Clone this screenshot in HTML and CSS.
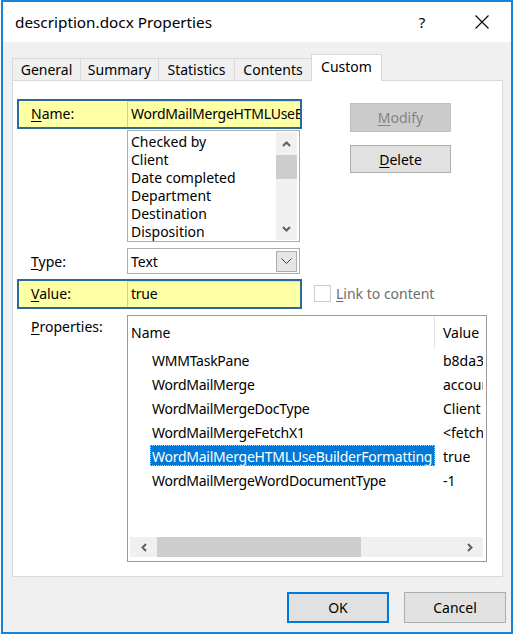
FILE: index.html
```html
<!DOCTYPE html>
<html>
<head>
<meta charset="utf-8">
<title>description.docx Properties</title>
<link rel="stylesheet" href="styles.css">
</head>
<body>
<div class="window">
  <div class="titlebar">
    <span class="title">description.docx Properties</span>
    <span class="help">?</span>
    <span class="close"><svg width="14" height="14" viewBox="0 0 14 14"><path d="M0.5 0.5 L13.5 13.5 M13.5 0.5 L0.5 13.5" stroke="#000" stroke-width="1.1" fill="none"/></svg></span>
  </div>
  <div class="client">
    <div class="tabs">
      <div class="tab t-general">General</div>
      <div class="tab t-summary">Summary</div>
      <div class="tab t-stats">Statistics</div>
      <div class="tab t-contents">Contents</div>
      <div class="tab t-custom active">Custom</div>
    </div>
    <div class="panel">
      <div class="top">
        <div class="leftcol">
          <div class="hl">
            <span class="hlabel"><u>N</u>ame:</span>
            <div class="field">WordMailMergeHTMLUseBuilderFormatting</div>
          </div>
          <div class="listbox">
            <div class="items">
              <div>Checked by</div>
              <div>Client</div>
              <div>Date completed</div>
              <div>Department</div>
              <div>Destination</div>
              <div>Disposition</div>
            </div>
            <div class="vscroll">
              <div class="arrow"><svg width="9" height="6" viewBox="0 0 9 6"><path d="M1 5 L4.5 1.5 L8 5" stroke="#606060" stroke-width="2" fill="none"/></svg></div>
              <div class="vthumb"></div>
              <div class="vspace"></div>
              <div class="arrow"><svg width="9" height="6" viewBox="0 0 9 6"><path d="M1 1 L4.5 4.5 L8 1" stroke="#606060" stroke-width="2" fill="none"/></svg></div>
            </div>
          </div>
          <div class="typerow">
            <span class="tlabel"><u>T</u>ype:</span>
            <div class="combo">
              <span class="ctext">Text</span>
              <span class="dd"><svg width="11" height="6" viewBox="0 0 11 6"><path d="M0.5 0.5 L5.5 5.5 L10.5 0.5" stroke="#404040" stroke-width="1" fill="none"/></svg></span>
            </div>
          </div>
          <div class="hl value">
            <span class="hlabel"><u>V</u>alue:</span>
            <div class="field">true</div>
          </div>
        </div>
        <div class="rightcol">
          <button class="btn disabled"><u>M</u>odify</button>
          <button class="btn delete"><u>D</u>elete</button>
          <div class="check">
            <span class="box"></span>
            <span class="clabel"><u>L</u>ink to content</span>
          </div>
        </div>
      </div>
      <div class="props">
        <span class="plabel"><u>P</u>roperties:</span>
        <div class="proplist">
          <div class="phead">
            <div class="hname">Name</div>
            <div class="hval">Value</div>
          </div>
          <div class="prows">
            <div class="prow"><div class="pname">WMMTaskPane</div><div class="pval">b8da3</div></div>
            <div class="prow"><div class="pname">WordMailMerge</div><div class="pval">account</div></div>
            <div class="prow"><div class="pname">WordMailMergeDocType</div><div class="pval">Client</div></div>
            <div class="prow"><div class="pname">WordMailMergeFetchX1</div><div class="pval">&lt;fetch</div></div>
            <div class="prow"><div class="pname sel">WordMailMergeHTMLUseBuilderFormatting</div><div class="pval">true</div></div>
            <div class="prow"><div class="pname">WordMailMergeWordDocumentType</div><div class="pval">-1</div></div>
          </div>
          <div class="hscroll">
            <div class="harrow"><svg width="6" height="9" viewBox="0 0 6 9"><path d="M5 1 L1.5 4.5 L5 8" stroke="#606060" stroke-width="2" fill="none"/></svg></div>
            <div class="hthumb"></div>
            <div class="hspace"></div>
            <div class="harrow"><svg width="6" height="9" viewBox="0 0 6 9"><path d="M1 1 L4.5 4.5 L1 8" stroke="#606060" stroke-width="2" fill="none"/></svg></div>
          </div>
        </div>
      </div>
    </div>
    <div class="footer">
      <button class="btn ok">OK</button>
      <button class="btn cancel">Cancel</button>
    </div>
  </div>
</div>
</body>
</html>
```

FILE: styles.css
```css
* { box-sizing: border-box; }
body {
  margin: 0;
  background: #ffffff;
  font-family: "Noto Sans", "Open Sans", sans-serif;
  font-size: 14px;
  color: #000;
}
u { text-decoration-thickness: 1px; text-underline-offset: 2px; }

.window {
  margin-left: 1px;
  width: 512px;
  height: 634px;
  border: 2px solid #1883d7;
  display: flex;
  flex-direction: column;
}

.titlebar {
  height: 40px;
  flex: none;
  background: #fff;
  display: flex;
  align-items: center;
}
.title { flex: 1; padding-left: 12px; font-size: 15.3px; }
.help { width: 30px; text-align: center; margin-right: 30px; font-size: 15px; }
.close { width: 30px; margin-right: 14px; display: flex; justify-content: center; }

.client {
  flex: 1;
  background: #f0f0f0;
  padding: 12px 0 0 9px;
}

.tabs { display: flex; align-items: flex-end; height: 26px; }
.tab {
  height: 22px;
  border: 1px solid #d9d9d9;
  border-bottom: none;
  background: #f0f0f0;
  text-align: center;
  line-height: 21px;
  margin-left: -1px;
}
.t-general { width: 69px; margin-left: 0; }
.t-summary { width: 79px; }
.t-stats { width: 77px; }
.t-contents { width: 78px; }
.t-custom { width: 71px; }
.tab.active {
  height: 27px;
  margin-bottom: -1px;
  background: #fff;
  position: relative;
  z-index: 1;
  line-height: 24px;
}

.panel {
  width: 491px;
  height: 497px;
  background: #fff;
  border: 1px solid #d9d9d9;
}

.top { display: flex; }
.leftcol {
  width: 285px;
  margin-left: 4px;
  margin-top: 18px;
  display: flex;
  flex-direction: column;
}
.hl {
  height: 30px;
  border: 2px solid #2a6a9c;
  background: #ffffa6;
  display: flex;
}
.hlabel { width: 108px; padding-left: 12px; line-height: 26px; }
.field {
  flex: 1;
  min-width: 0;
  overflow: hidden;
  white-space: nowrap;
  border-left: 1px solid #cfcf9f;
  border-top: 1px solid #e4e4b0;
  padding-left: 3px;
  line-height: 24px;
  letter-spacing: -0.25px;
}

.listbox {
  margin-top: 1px;
  margin-left: 110px;
  width: 173px;
  height: 112px;
  border: 1px solid #adadad;
  display: flex;
  background: #fff;
}
.items { flex: 1; padding: 2px 0 0 3px; line-height: 18px; }
.vscroll {
  width: 21px;
  margin: 1px 2px 1px 0;
  background: #f0f0f0;
  display: flex;
  flex-direction: column;
}
.arrow { height: 23px; display: flex; align-items: center; justify-content: center; }
.vthumb { height: 24px; background: #cdcdcd; }
.vspace { flex: 1; }

.typerow { display: flex; margin-top: 6px; height: 26px; }
.tlabel { width: 110px; padding-left: 14px; line-height: 28px; }
.combo {
  width: 173px;
  border: 1px solid #adadad;
  background: #fff;
  display: flex;
  align-items: center;
}
.ctext { flex: 1; padding-left: 3px; }
.dd {
  width: 21px;
  height: 21px;
  margin-right: 2px;
  background: #e5e5e5;
  border: 1px solid #adadad;
  display: flex;
  align-items: center;
  justify-content: center;
}
.hl.value { margin-top: 5px; }

.rightcol {
  display: flex;
  flex-direction: column;
  align-items: flex-start;
}
.btn {
  font: inherit;
  color: #000;
  background: #e1e1e1;
  border: 1px solid #adadad;
  padding: 0;
  margin: 0;
}
.rightcol .btn { width: 101px; margin-left: 48px; }
.btn.disabled {
  margin-top: 22px;
  height: 29px;
  background: #cccccc;
  border-color: #bfbfbf;
  color: #838383;
}
.btn.delete { margin-top: 13px; height: 28px; }
.check {
  margin-top: auto;
  margin-bottom: 7px;
  margin-left: 12px;
  display: flex;
  align-items: center;
  height: 17px;
}
.box {
  width: 17px;
  height: 17px;
  border: 1px solid #cccccc;
  background: #fff;
}
.clabel { margin-left: 5px; color: #6d6d6d; }

.props { display: flex; margin-top: 6px; }
.plabel { width: 114px; padding-left: 18px; padding-top: 2px; }
.proplist {
  width: 360px;
  height: 247px;
  border: 1px solid #9a9a9a;
  display: flex;
  flex-direction: column;
}
.phead { display: flex; height: 33px; flex: none; }
.hname { width: 307px; padding-left: 3px; border-right: 1px solid #e5e5e5; line-height: 34px; }
.hval { padding-left: 8px; line-height: 34px; }
.prows { flex: 1; padding-right: 3px; }
.prow { display: flex; height: 24px; }
.pname {
  margin-left: 22px;
  width: 285px;
  flex: none;
  height: 21px;
  padding-left: 2px;
  line-height: 23px;
  white-space: nowrap;
  letter-spacing: -0.25px;
}
.pname.sel {
  background: #0078d7;
  color: #fff;
  outline: 1px dotted #f3c27a;
  outline-offset: -1px;
}
.pval { flex: 1; min-width: 0; overflow: hidden; white-space: nowrap; padding-left: 8px; line-height: 23px; }

.hscroll {
  height: 20px;
  margin: 0 3px 4px 2px;
  background: #f0f0f0;
  display: flex;
  flex: none;
}
.harrow { width: 27px; display: flex; align-items: center; justify-content: center; }
.hthumb { width: 204px; background: #cdcdcd; }
.hspace { flex: 1; }

.footer {
  display: flex;
  justify-content: flex-end;
  gap: 15px;
  padding-top: 15px;
  padding-right: 5px;
}
.footer .btn { width: 102px; height: 31px; }
.btn.ok { border: 2px solid #0078d7; }
```
